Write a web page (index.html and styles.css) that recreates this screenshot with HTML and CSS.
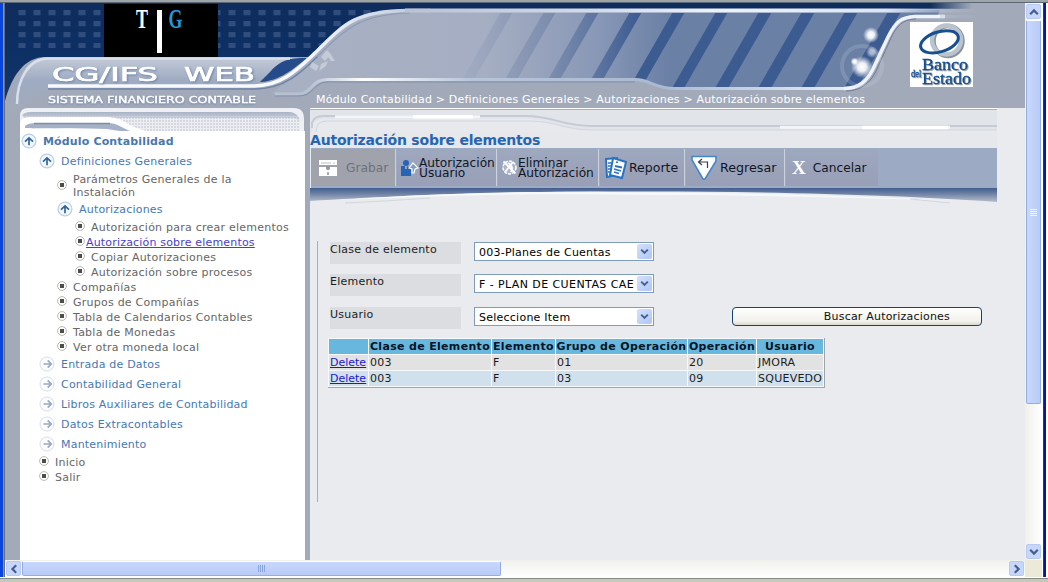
FILE: index.html
```html
<!DOCTYPE html>
<html lang="es">
<head>
<meta charset="utf-8">
<title>CG/IFS WEB - Autorización sobre elementos</title>
<link rel="stylesheet" href="styles.css">
</head>
<body>
<svg class="defs" width="0" height="0" aria-hidden="true">
  <symbol id="open" viewBox="0 0 16 16"><circle cx="8" cy="8" r="6.9" fill="#f2f7fb" stroke="#bdcfe4" stroke-width="1.3"/><path d="M8 12.3V5M4 8.7L8 4.9L12 8.7" fill="none" stroke="#31659e" stroke-width="1.7"/></symbol>
  <symbol id="closed" viewBox="0 0 16 16"><circle cx="8" cy="8" r="7" fill="#fbfcfe" stroke="#d8deea" stroke-width="1"/><path d="M4.5 8H12M8.7 4.3L12.3 8L8.7 11.7" fill="none" stroke="#9ba8bd" stroke-width="1.7"/></symbol>
  <symbol id="dot" viewBox="0 0 10 10"><circle cx="5" cy="5" r="4.4" fill="#fff" stroke="#b1b1ab" stroke-width=".9"/><rect x="3" y="3" width="4" height="4" fill="#4d4d49"/></symbol>
  <symbol id="chev" viewBox="0 0 10 8"><path d="M1.2 1.8L5 5.6L8.8 1.8" fill="none" stroke="#44608f" stroke-width="2.2"/></symbol>
</svg>
<div class="window">
  <div class="edge-top"></div>
  <div class="edge-left"></div>
  <div class="page">
    <svg class="header" viewBox="5 3 1020 105" width="1020" height="105">
      <defs>
        <pattern id="tiles" x="18.5" y="10" width="15" height="11" patternUnits="userSpaceOnUse"><rect width="7" height="5.2" fill="#304e7d"/></pattern>
        <linearGradient id="navy" x1="0" y1="0" x2="0" y2="1"><stop offset="0" stop-color="#0f2c5c"/><stop offset=".5" stop-color="#0d3065"/><stop offset="1" stop-color="#173768"/></linearGradient>
        <linearGradient id="sweep" gradientUnits="userSpaceOnUse" x1="300" y1="0" x2="670" y2="0"><stop offset="0" stop-color="#a8b1c3"/><stop offset=".5" stop-color="#a5aec2"/><stop offset=".8" stop-color="#8998b7"/><stop offset="1" stop-color="#6a80a5"/></linearGradient>
        <linearGradient id="bars" gradientUnits="userSpaceOnUse" x1="440" y1="0" x2="640" y2="0"><stop offset="0" stop-color="#8f9cb8" stop-opacity="0"/><stop offset=".55" stop-color="#7486aa" stop-opacity=".75"/><stop offset="1" stop-color="#3c5b91"/></linearGradient>
        <linearGradient id="topfade" gradientUnits="userSpaceOnUse" x1="300" y1="0" x2="990" y2="0"><stop offset="0" stop-color="#fff"/><stop offset=".15" stop-color="#b8c2d3"/><stop offset=".45" stop-color="#d6ddea"/><stop offset=".6" stop-color="#eef2fb"/><stop offset=".85" stop-color="#dde5f5"/><stop offset="1" stop-color="#a2aaba" stop-opacity="0"/></linearGradient>
        <linearGradient id="navyfade" gradientUnits="userSpaceOnUse" x1="930" y1="0" x2="972" y2="0"><stop offset="0" stop-color="#a2aaba" stop-opacity="0"/><stop offset="1" stop-color="#a2aaba"/></linearGradient>
        <linearGradient id="plate" x1="0" y1="0" x2="0" y2="1"><stop offset="0" stop-color="#c3cad7"/><stop offset=".45" stop-color="#9eabc2"/><stop offset="1" stop-color="#a2aaba"/></linearGradient>
        <linearGradient id="lip" gradientUnits="userSpaceOnUse" x1="310" y1="0" x2="845" y2="0"><stop offset="0" stop-color="#b6c1d1"/><stop offset=".1" stop-color="#fff"/><stop offset=".3" stop-color="#b7c5d9"/><stop offset=".65" stop-color="#a9b9d1"/><stop offset="1" stop-color="#e4ebf8"/></linearGradient>
        <linearGradient id="white-in" gradientUnits="userSpaceOnUse" x1="300" y1="0" x2="430" y2="0"><stop offset="0" stop-color="#f8f9fc"/><stop offset=".5" stop-color="#d9e0ec"/><stop offset="1" stop-color="#b9c3d4"/></linearGradient>
        <radialGradient id="glow"><stop offset="0" stop-color="#fff"/><stop offset=".4" stop-color="#fff" stop-opacity=".9"/><stop offset="1" stop-color="#fff" stop-opacity="0"/></radialGradient>
        <clipPath id="band"><path d="M300 13H918C900 14 896 20 888 35L872 68C866 81 856 87 845 87H675C655 87 650 78 635 78H322L270 78Z"/></clipPath>
      </defs>
      <rect x="5" y="3" width="1020" height="105" fill="url(#navy)"/>
      <rect x="18" y="6" width="400" height="42" fill="url(#tiles)"/>
      <rect x="925" y="3" width="100" height="105" fill="url(#navyfade)"/>
      <path d="M5 108V101C12 76 24 57 46 57H310L335 33C360 14 382 9 420 9H975L1025 9V108Z" fill="#a2aaba"/>
      <path d="M12 95C20 72 29 58 46 58H302L250 86H48V90C42 96 30 98 22 108H8Z" fill="url(#plate)"/>
      <path d="M300 58C284 59 278 63 270 72C265 77 262 80 260 82C280 81 293 69 307 58Z" fill="#264b8a"/>
      <path d="M312 58C330 40 342 23 362 16C380 9 395 10 420 10H940L905 95H270C290 80 300 69 312 58Z" fill="url(#sweep)"/>
      <g clip-path="url(#band)">
        <path fill="url(#bars)" d="M502 10H514L468 90H456ZM545 10H557L511 90H499ZM588 10H600L554 90H542ZM631 10H643L597 90H585ZM674 10H686L640 90H628ZM717 10H729L683 90H671ZM760 10H773L727 90H714ZM803 10H816L770 90H757ZM846 10H859L813 90H800ZM889 10H902L856 90H843Z"/>
      </g>
      <path d="M845 89C859 89 867 81 873 69L888 37C896 21 902 18 915 18H1025V108H845Z" fill="#a2aaba"/>
      <path d="M270 94H298C312 94 311 79 327 79H635C650 79 655 88 675 88H845V108H270Z" fill="#a2aaba"/>
      <path d="M48 89H255C284 89 301 73 318 56" fill="none" stroke="#6f83a8" stroke-width="1.5"/>
      <path d="M17 104C17 79 29 59 47 58.500H290" fill="none" stroke="#d9dfeb" stroke-width="2.500"/>
      <path d="M48 86H254C282 86 297 70 316 52C345 23 356 11 408 10.500H430" fill="none" stroke="url(#white-in)" stroke-width="3.500"/>
      <path d="M317 57C345 28 362 14 410 13" fill="none" stroke="#8e9ab3" stroke-width="1.200"/>
      <path d="M405 8.500H985V12.500H405Z" fill="url(#topfade)"/>
      <path d="M275 94H298C312 94 311 79.500 327 79.500H635C650 79.500 655 88.500 675 88.500H845" fill="none" stroke="url(#lip)" stroke-width="3"/>
      <path d="M275 96H299C314 96 313 82 328 82H635" fill="none" stroke="#7e8fac" stroke-width="1"/>
      <path d="M844 88.500C859 88.500 867 81 873 69L888 37C896 21 902 17 915 16.500H945" fill="none" stroke="#edf2fc" stroke-width="3.500"/>
      <path d="M940 15H975V18H940Z" fill="url(#topfade)"/>
      <path d="M846 91C862 91 871 82 877 69L891 38C898 23 905 19.500 916 19" fill="none" stroke="#707b92" stroke-width="1"/>
      <g fill="#d2d8e3" opacity=".65"><path d="M321 57L326 51L330 55L325 61ZM327 50L330 53L335 61L331 61L326 54ZM312 62L319 66L316 71L310 67ZM321 64L328 61L326 66L319 71Z"/></g>
      <circle cx="862" cy="66" r="20" fill="none" stroke="#d7dfec" stroke-opacity=".18" stroke-width="4"/>
      <circle cx="871" cy="35" r="8" fill="url(#glow)"/><circle cx="872" cy="52" r="6" fill="url(#glow)" opacity=".6"/><circle cx="862" cy="67" r="11" fill="url(#glow)"/><circle cx="854.500" cy="61.500" r="4" fill="url(#glow)"/>
      <rect x="104" y="4" width="114" height="53"/>
      <rect x="157" y="10" width="5" height="43" fill="#fff"/>
      <text class="tg" x="136" y="28" textLength="12" lengthAdjust="spacingAndGlyphs" fill="#fff">T</text>
      <text class="tg" x="168.500" y="28" textLength="14" lengthAdjust="spacingAndGlyphs" fill="#2497dc">G</text>
      <g class="brand">
        <text x="52" y="80.500" textLength="106" lengthAdjust="spacingAndGlyphs">CG/IFS</text>
        <text x="184" y="80.500" textLength="71" lengthAdjust="spacingAndGlyphs">WEB</text>
      </g>
      <text class="tagline" x="48" y="103" textLength="208" lengthAdjust="spacingAndGlyphs">SISTEMA FINANCIERO CONTABLE</text>
      <text class="crumbs" x="316" y="103" textLength="549">Módulo Contabilidad &gt; Definiciones Generales &gt; Autorizaciones &gt; Autorización sobre elementos</text>
      <rect x="910" y="22" width="63" height="65" fill="#fff"/>
      <g fill="none">
        <ellipse cx="948" cy="41" rx="14.500" ry="15" stroke="#8a9199" stroke-width="4.500"/>
        <ellipse cx="946.500" cy="40" rx="14.500" ry="14.500" stroke="#bac4ce" stroke-width="4.500"/>
        <ellipse cx="939.500" cy="42" rx="19.500" ry="10" transform="rotate(-17 939 42)" stroke="#174f91" stroke-width="3"/>
      </g>
      <g class="bank">
        <text x="922" y="69.500" textLength="46" lengthAdjust="spacingAndGlyphs">Banco</text>
        <text x="922" y="84" textLength="49" lengthAdjust="spacingAndGlyphs">Estado</text>
        <text class="del" x="911" y="77" textLength="10.500" lengthAdjust="spacingAndGlyphs">del</text>
      </g>
    </svg>
    <div class="body">
      <nav class="menu">
        <svg class="menu-cap" viewBox="20 108 285 23" width="285" height="23">
          <defs><pattern id="mesh" x="0" y="0" width="3" height="3" patternUnits="userSpaceOnUse"><rect width="3" height="3" fill="#eceef2"/><rect width="2" height="2" fill="#d3d8e1"/></pattern>
          <linearGradient id="capfade" x1="0" y1="0" x2="0" y2="1"><stop offset="0" stop-color="#a8b2c4"/><stop offset="1" stop-color="#a8b2c4" stop-opacity="0"/></linearGradient></defs>
          <rect x="20" y="108" width="285" height="23" fill="#a2aaba"/>
          <path d="M20 131V116Q20 108 28 108H294Q304 108 304 119V131Z" fill="#eef0f5"/>
          <path d="M22 115Q25 112 32 112H290Q299 113 300 122V131H110Z" fill="url(#mesh)"/>
          <path d="M22 115Q25 112 32 112H290Q299 113 300 122L295 118H24Z" fill="url(#capfade)"/>
          <path d="M20 131V124Q21 117 30 117H105C125 117 124 126 147 131Z" fill="#fff"/>
          <path d="M25 126Q28 123 36 123H107C118 123 122 128 130 131H110C90 128 40 129 25 128Z" fill="#a5b1c6"/>
          <path d="M34 123.500H110" stroke="#7d8eab" stroke-width="1.500"/>
          <path d="M25 130Q60 127 107 129L120 131Z" fill="#fff"/>
        </svg>
        <ul class="tree">
          <li class="folder l0"><svg><use href="#open"/></svg><b>Módulo Contabilidad</b></li>
          <li class="folder l1"><svg><use href="#open"/></svg><span>Definiciones Generales</span></li>
          <li class="leaf l2 double"><svg><use href="#dot"/></svg><span>Parámetros Generales de la<br>Instalación</span></li>
          <li class="folder l2"><svg><use href="#open"/></svg><span>Autorizaciones</span></li>
          <li class="leaf l3"><svg><use href="#dot"/></svg><span>Autorización para crear elementos</span></li>
          <li class="leaf l3 active"><svg><use href="#dot"/></svg><a>Autorización sobre elementos</a></li>
          <li class="leaf l3"><svg><use href="#dot"/></svg><span>Copiar Autorizaciones</span></li>
          <li class="leaf l3"><svg><use href="#dot"/></svg><span>Autorización sobre procesos</span></li>
          <li class="leaf l2"><svg><use href="#dot"/></svg><span>Compañías</span></li>
          <li class="leaf l2"><svg><use href="#dot"/></svg><span>Grupos de Compañías</span></li>
          <li class="leaf l2"><svg><use href="#dot"/></svg><span>Tabla de Calendarios Contables</span></li>
          <li class="leaf l2"><svg><use href="#dot"/></svg><span>Tabla de Monedas</span></li>
          <li class="leaf l2"><svg><use href="#dot"/></svg><span>Ver otra moneda local</span></li>
          <li class="folder l1"><svg><use href="#closed"/></svg><span>Entrada de Datos</span></li>
          <li class="folder l1"><svg><use href="#closed"/></svg><span>Contabilidad General</span></li>
          <li class="folder l1"><svg><use href="#closed"/></svg><span>Libros Auxiliares de Contabilidad</span></li>
          <li class="folder l1"><svg><use href="#closed"/></svg><span>Datos Extracontables</span></li>
          <li class="folder l1"><svg><use href="#closed"/></svg><span>Mantenimiento</span></li>
          <li class="leaf l1"><svg><use href="#dot"/></svg><span>Inicio</span></li>
          <li class="leaf l1"><svg><use href="#dot"/></svg><span>Salir</span></li>
        </ul>
      </nav>
      <main class="content">
        <svg class="content-cap" viewBox="310 108 687 24" width="687" height="24">
          <rect x="310" y="108" width="687" height="24" fill="#e1e4e9"/>
          <path d="M310 108.500H997" stroke="#fff"/><path d="M310 109.500H997" stroke="#a9b0bd"/>
          <path d="M312 131V126Q314 119 323 119H525C555 119 560 130 592 130H997V132H312Z" fill="#e7e9ed"/>
          <path d="M312 131V126Q314 119 323 119H525C555 119 560 129 592 129H997" transform="translate(0,-3)" fill="none" stroke="#c5cad4" stroke-width="2"/>
          <path d="M316 132Q316 121 326 121H530C555 121 565 130 592 130H997" fill="none" stroke="#d2d6dd"/>
          <path d="M335 116.800H480M780 127.300H950" stroke="#f3f5f8" stroke-width="3"/><path d="M413 116.800H473M862 127.500H948" stroke="#fff" stroke-width="3.500"/>
        </svg>
        <h1>Autorización sobre elementos</h1>
        <div class="toolbar">
          <div class="tool save"><svg width="20" height="18" viewBox="0 0 20 18"><path d="M1 1H19V6H1ZM1 8H19V17H1Z" fill="#fff"/><path d="M3 4H13M15 4H17" stroke="#b9bdc5"/><circle cx="10" cy="9" r="2" fill="#8e9298"/><path d="M10 13V16" stroke="#8e9298" stroke-width="1.500"/></svg><span>Grabar</span></div>
          <div class="tool user"><svg width="19" height="18" viewBox="0 0 19 18"><circle cx="6" cy="4" r="3" fill="#2763b6"/><path d="M1 7H5V10H7V7L11 10V17H1Z" fill="#2763b6"/><path d="M9 9L13 4L18 9L15 10L14 14H12V10Z" fill="#7e9bc9" stroke="#fff" stroke-width="1.200"/></svg><span>Autorización<br>Usuario</span></div>
          <div class="tool remove"><svg width="17" height="17" viewBox="0 0 17 17"><circle cx="8.500" cy="8.500" r="6.500" fill="#aeb6c8" stroke="#fff" stroke-width="1.500" stroke-dasharray="3 1.200"/><path d="M2.500 2.500L14.500 14.500M12 3L4 13M7 4Q13 7 10 13" fill="none" stroke="#fff" stroke-width="1.900"/></svg><span>Eliminar<br>Autorización</span></div>
          <div class="tool report"><svg width="24" height="24" viewBox="0 0 24 24"><path d="M2 3L13 2V19L3 21Z" fill="#fff" stroke="#2873c2" stroke-width="2"/><path d="M4 7H8M4 10H8M4 13H8M4 16H8" stroke="#2873c2" stroke-width="1.500"/><path d="M9 2L22 6L18 22L6 19Z" fill="#fff" stroke="#2873c2" stroke-width="2"/><path d="M12 6L14 6.500M11 10L18 11.500M10 13L17 15M10 16L15 17.500" stroke="#2873c2" stroke-width="1.800"/></svg><span>Reporte</span></div>
          <div class="tool back"><svg width="28" height="26" viewBox="0 0 28 26"><path d="M2 1.500H26V6L15 24H13L2 5Z" fill="#fff" stroke="#4388cb" stroke-width="1.600"/><path d="M17.500 13V7H9M12 4L8.500 7L12 10" fill="none" stroke="#343e51" stroke-width="1.200"/></svg><span>Regresar</span></div>
          <div class="tool cancel"><b>X</b><span>Cancelar</span></div>
        </div>
        <svg class="shelf" viewBox="310 188 687 24" width="687" height="24">
          <defs><linearGradient id="shade" x1="0" y1="0" x2="0" y2="1"><stop offset="0" stop-color="#415c8f"/><stop offset=".35" stop-color="#687ca1"/><stop offset="1" stop-color="#b6bdcb"/></linearGradient></defs>
          <path d="M310 188H997V202C900 195 770 191.500 650 191.500C520 191 400 195 310 201Z" fill="url(#shade)"/>
          <path d="M340 200C470 191 560 191 650 192.500C760 193 860 196 960 201C850 197 740 195 650 195C540 193 450 195 340 200Z" fill="#f6f8fb"/>
          <path d="M345 203Q390 201 430 198M910 199L950 203" fill="none" stroke="#d2d7e0"/>
        </svg>
        <section class="panel">
          <div class="row"><label>Clase de elemento</label><div class="select"><span>003-Planes de Cuentas</span><i><svg><use href="#chev"/></svg></i></div></div>
          <div class="row"><label>Elemento</label><div class="select caps"><span>F - PLAN DE CUENTAS CAE</span><i><svg><use href="#chev"/></svg></i></div></div>
          <div class="row last"><label>Usuario</label><div class="select"><span>Seleccione Item</span><i><svg><use href="#chev"/></svg></i></div><button>Buscar Autorizaciones</button></div>
          <table>
            <colgroup><col class="c1"><col class="c2"><col class="c3"><col class="c4"><col class="c5"><col class="c6"></colgroup>
            <tr><th></th><th>Clase de Elemento</th><th>Elemento</th><th>Grupo de Operación</th><th>Operación</th><th>Usuario</th></tr>
            <tr><td><a>Delete</a></td><td>003</td><td>F</td><td>01</td><td>20</td><td>JMORA</td></tr>
            <tr class="alt"><td><a>Delete</a></td><td>003</td><td>F</td><td>03</td><td>09</td><td>SQUEVEDO</td></tr>
          </table>
        </section>
      </main>
    </div>
  </div>
  <div class="vbar"><i class="arrow up"><svg><use href="#chev"/></svg></i><div class="vthumb"><u></u><u></u><u></u><u></u></div><i class="arrow down"><svg><use href="#chev"/></svg></i></div>
  <div class="edge-right"></div>
  <div class="hbar"><i class="arrow left"><svg><use href="#chev"/></svg></i><div class="hthumb"><u></u><u></u><u></u><u></u></div><i class="arrow right"><svg><use href="#chev"/></svg></i></div>
  <div class="corner"></div>
  <div class="edge-bottom"></div>
</div>
</body>
</html>
```
FILE: styles.css
```css
* { box-sizing: border-box; }
body { margin: 0; font: 11px/13px "DejaVu Sans", Verdana, sans-serif; color: #1c1c1c; }
.defs { position: absolute; }
.window {
  display: grid; width: 1048px; height: 582px; overflow: hidden;
  grid-template: 3px 557px 17px 5px / 5px 1020px 17px 6px;
  grid-template-areas: "t t t t" "l page v r" "l h k r" "b b b b";
}
.edge-top { grid-area: t; background: linear-gradient(#9fa5a6 0 66%, #596879 66%); }
.edge-left { grid-area: l; background: linear-gradient(90deg, #0845dc 0 3px, #8795b5 3px 4px, #686d76 4px); }
.edge-right { grid-area: r; background: linear-gradient(90deg, #fff 0 1px, #0834c8 1px 2px, #001c99 2px 4px, #fff 4px); }
.edge-bottom { grid-area: b; background: linear-gradient(#fff 0 1px, #858b83 1px 2px, #c5c9bd 2px); }
.page { grid-area: page; display: flex; flex-direction: column; background: #a2aaba; min-width: 0; }
.header { display: block; flex: none; }
.tg { font: bold 27px "Liberation Serif", serif; }
.brand { font: 20px "DejaVu Sans", sans-serif; fill: #fff; stroke: #fff; stroke-width: .7px; filter: drop-shadow(1px 1px 1px #6f83a8); }
.tagline { font: 8.5px "DejaVu Sans", sans-serif; fill: #fff; stroke: #fff; stroke-width: .35px; filter: drop-shadow(0 1px 1px #7286aa); }
.crumbs { font: 11px "DejaVu Sans", sans-serif; fill: #fff; }
.bank { font: 17px "Liberation Serif", serif; fill: #124c8c; stroke: #124c8c; stroke-width: .3px; filter: drop-shadow(1px 1px 0 #9aa2ad); }
.del { font-size: 11px; }

.body { display: flex; flex: 1; padding-left: 15px; }
.menu { width: 285px; background: #fff; margin-right: 5px; }
.menu-cap { display: block; }
.tree { list-style: none; margin: 0; padding: 0; color: #666; letter-spacing: .24px; white-space: nowrap; }
.tree li { display: flex; align-items: center; }
.tree svg { flex: none; }
.folder { height: 20px; color: #4678b4; letter-spacing: .2px; }
.folder svg { width: 16px; height: 16px; margin-right: 6px; }
.folder b { color: #4a78ad; letter-spacing: .15px; }
.folder.l0 { padding-left: 1px; }
.folder.l1 { padding-left: 19px; }
.folder.l2 { padding-left: 37px; }
.leaf { height: 15px; }
.leaf svg { width: 10px; height: 10px; margin: -2px 6px 0 0; }
.leaf span, .leaf a { padding-top: 1px; }
.leaf.l1 { padding-left: 19px; }
.leaf.l2 { padding-left: 37px; }
.leaf.l3 { padding-left: 55px; }
.leaf.double { height: 28px; }
.leaf.double svg { margin-top: 0; }
.leaf.active svg { margin-right: 1px; }
.leaf.active a { color: #4a3dcf; text-decoration: underline; letter-spacing: .18px; }

.content { flex: 1; background: #e9ebee; min-width: 0; }
.content-cap { display: block; }
h1 { width: 687px; height: 16px; margin: 0; background: #e6e8ec; font-size: 14px; line-height: 16px; color: #2664b5; white-space: nowrap; letter-spacing: -.2px; }
.toolbar { display: flex; width: 686px; height: 40px; margin-left: 1px; background: #9cabc3; padding-top: 1px; }
.tool { display: flex; align-items: center; height: 37px; border-right: 1px solid #cbd2de; margin-right: 1px; background: linear-gradient(#9ea8be, #989fb7); font-size: 12.2px; line-height: 10px; color: #101725; white-space: nowrap; }
.tool svg { flex: none; }
.save { width: 85px; padding-left: 7px; gap: 8px; background: #a0a3ab; color: #6e7179; }
.user { width: 100px; padding-left: 3px; }
.remove { width: 101px; padding-left: 3px; }
.report { width: 85px; padding-left: 4px; gap: 1px; font-size: 12.5px; }
.back { width: 99px; padding-left: 4px; gap: 2px; font-size: 12.7px; }
.cancel { width: 92px; padding-left: 6px; gap: 7px; border: 0; font-size: 12.2px; }
.cancel b { font: bold 19px "Liberation Serif", serif; color: #fff; }
.shelf { display: block; }

.panel { margin: 29px 0 0 7px; height: 261px; border-left: 1px solid #a9aeb7; padding: 1px 0 0 12px; }
.row { display: flex; align-items: flex-start; height: 32px; letter-spacing: .24px; }
.row:nth-child(2) { height: 33px; }
.row.last { height: 31px; }
label { width: 131px; height: 22px; padding-top: 1px; background: #dbdde1; margin-right: 13px; }
.select { display: flex; align-items: center; justify-content: space-between; width: 180px; height: 19px; border: 1px solid #7f9db9; background: #fff; padding: 0 1px 0 4px; white-space: nowrap; color: #000; }
.select span { padding-top: 1px; }
.select.caps span { letter-spacing: .42px; }
.select i { display: flex; flex: none; align-items: center; justify-content: center; width: 15px; height: 15px; border-radius: 2px; background: linear-gradient(135deg, #d4e1fd, #aec5f6); }
.select svg { width: 9px; height: 7px; }
button { width: 250px; height: 19px; margin: 0 0 0 78px; padding: 0 31px 0 0; border: 1.5px solid #17416f; border-radius: 4px; background: linear-gradient(#fff, #f1f0e9 80%, #dcd8cc); font: inherit; letter-spacing: .2px; text-align: right; color: #111; }
table { width: 496px; margin-left: -2px; table-layout: fixed; border-collapse: separate; border-spacing: 1px; background: #f7f8fa; border: solid #9da7a9; border-width: 0 1px 1px 0; letter-spacing: .25px; }
th, td { height: 15px; padding: 1px 1px 0; line-height: 14px; white-space: nowrap; background: #e2e2e2; text-align: left; }
th { background: #67b7df; padding-left: 0; padding-right: 0; text-align: center; color: #061525; letter-spacing: .33px; }
.alt td { background: #d0e1ed; }
td a { color: #2018d0; text-decoration: underline; letter-spacing: 0; }
.c1 { width: 39px; } .c2 { width: 122px; } .c3 { width: 63px; } .c4 { width: 131px; } .c5 { width: 68px; } .c6 { width: 66px; }

.vbar { grid-area: v; display: flex; flex-direction: column; padding: 1px; background: linear-gradient(90deg, #f0f0ec, #fff); }
.hbar { grid-area: h; display: flex; padding: 1px; background: linear-gradient(#f0f0ec, #fff); }
.corner { grid-area: k; background: #ece9d8; }
.arrow { flex: none; display: flex; align-items: center; justify-content: center; width: 15px; height: 15px; border: 1px solid #b8caf4; border-radius: 2px; background: #c7d6fb; }
.arrow svg { width: 10px; height: 8px; }
.up svg { transform: rotate(180deg); }
.left svg { transform: rotate(90deg); }
.right svg { transform: rotate(-90deg); }
.down { margin-top: auto; }
.right { margin-left: auto; }
.vthumb { display: flex; flex-direction: column; align-items: center; justify-content: center; gap: 1px; width: 15px; height: 384px; margin-top: 1px; border: 1px solid #94ace0; border-top-color: #fff; border-radius: 2px; background: linear-gradient(90deg, #c8d7fd, #b9cbf6); }
.vthumb u { width: 7px; height: 1px; background: #f0f5ff; }
.hthumb { display: flex; align-items: center; justify-content: center; gap: 1px; width: 479px; height: 15px; margin-left: 1px; border: 1px solid #94ace0; border-top-color: #fff; border-radius: 2px; background: linear-gradient(#c8d7fd, #b9cbf6); }
.hthumb u { width: 1px; height: 7px; background: #8aa5dd; }
```
